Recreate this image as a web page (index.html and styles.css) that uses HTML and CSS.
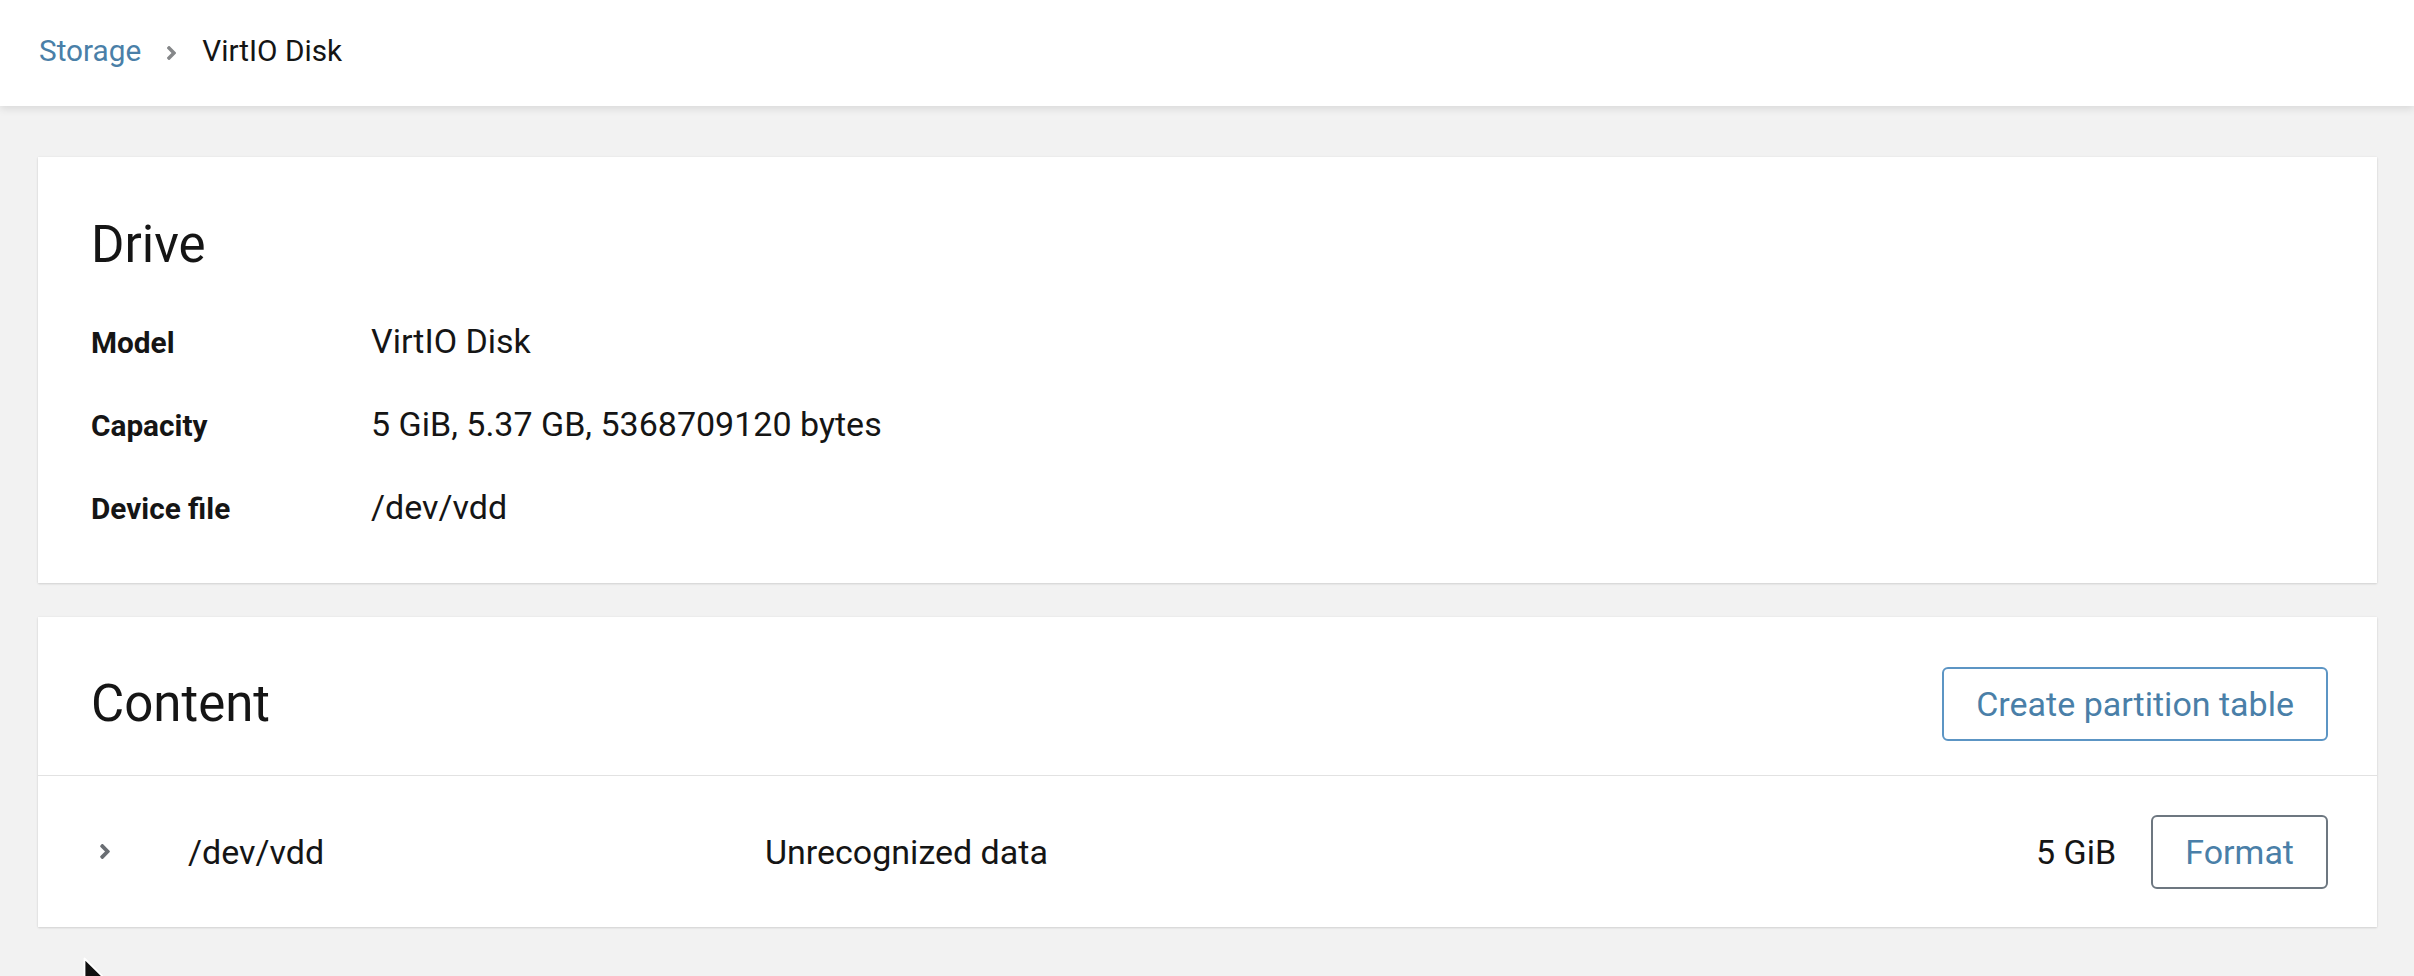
FILE: index.html
```html
<!DOCTYPE html>
<html>
<head>
<meta charset="utf-8">
<link rel="stylesheet" href="styles.css">
</head>
<body>
<header class="topbar">
  <nav class="crumbs">
    <a class="crumb-link">Storage</a>
    <svg class="crumb-sep" viewBox="25 96 206 320" width="9" height="14"><path d="M224.3 273l-136 136c-9.4 9.4-24.6 9.4-33.9 0l-22.6-22.6c-9.4-9.4-9.4-24.6 0-33.9l96.4-96.4-96.4-96.4c-9.4-9.4-9.4-24.6 0-33.9L54.3 103c9.4-9.4 24.6-9.4 33.9 0l136 136c9.5 9.4 9.5 24.6.1 34z"/></svg>
    <span class="crumb-current">VirtIO Disk</span>
  </nav>
</header>
<main class="page">
  <section class="card">
    <h2 class="card-title">Drive</h2>
    <dl class="info">
      <dt>Model</dt><dd>VirtIO Disk</dd>
      <dt>Capacity</dt><dd>5 GiB, 5.37 GB, 5368709120 bytes</dd>
      <dt>Device file</dt><dd>/dev/vdd</dd>
    </dl>
  </section>
  <section class="card">
    <div class="card-head">
      <h2 class="card-title">Content</h2>
      <button class="btn btn-blue">Create partition table</button>
    </div>
    <div class="row">
      <span class="toggle"><svg viewBox="25 96 206 320" width="10" height="15"><path d="M224.3 273l-136 136c-9.4 9.4-24.6 9.4-33.9 0l-22.6-22.6c-9.4-9.4-9.4-24.6 0-33.9l96.4-96.4-96.4-96.4c-9.4-9.4-9.4-24.6 0-33.9L54.3 103c9.4-9.4 24.6-9.4 33.9 0l136 136c9.5 9.4 9.5 24.6.1 34z"/></svg></span>
      <span class="col-name">/dev/vdd</span>
      <span class="col-type">Unrecognized data</span>
      <span class="col-size">5 GiB</span>
      <button class="btn btn-gray">Format</button>
    </div>
  </section>
</main>
<svg class="cursor" viewBox="0 0 16 24" width="24" height="36"><path d="M1 1 L1 19 L5.5 14.8 L8.5 21.5 L11 20.4 L8.1 13.9 L14 13.9 Z" fill="#111" stroke="#fff" stroke-width="1.2" stroke-linejoin="round"/></svg>
</body>
</html>
```

FILE: styles.css
```css
* { box-sizing: border-box; }
html, body { margin: 0; padding: 0; }
body {
  background: #f2f2f2;
  font-family: "Roboto", "Liberation Sans", sans-serif;
  color: #151515;
  width: 2414px;
  height: 976px;
  overflow: hidden;
  position: relative;
}
.topbar {
  height: 106px;
  background: #fff;
  box-shadow: 0 3px 8px rgba(0,0,0,0.10);
  display: flex;
  align-items: center;
  padding-left: 39px;
  position: relative;
}
.crumbs {
  display: flex;
  align-items: center;
  gap: 26px;
  font-size: 29.75px;
  line-height: 44px;
  margin-top: -4px;
}
.crumb-link { color: #4a7fa8; }
.crumb-sep { fill: #858789; margin-top: 3px; }
.crumb-current { color: #151515; }
.page {
  padding: 51px 37px 0 38px;
  display: flex;
  flex-direction: column;
  gap: 34px;
}
.card {
  background: #fff;
  box-shadow: 0 1px 2px rgba(3,3,3,0.12), 0 0 2px rgba(3,3,3,0.06);
}
.card-title { margin: 0; font-weight: 400; font-size: 51px; line-height: 66px; }
.card > .card-title { padding: 55px 53px 0; }
.info {
  margin: 38px 0 0;
  padding: 0 53px 49px;
  display: grid;
  grid-template-columns: 280px 1fr;
  align-items: baseline;
  row-gap: 31px;
  font-size: 34px;
  line-height: 51px;
}
.info dt { font-weight: 700; font-size: 29.75px; }
.info dd { margin: 0; }
.card-head {
  display: flex;
  align-items: center;
  justify-content: space-between;
  padding: 50px 49px 34px 53px;
  border-bottom: 1px solid #e2e2e2;
}
.btn {
  font: inherit;
  font-size: 34px;
  background: #fff;
  color: #4a7fa8;
  border-radius: 6px;
  height: 74px;
  padding: 0 32px;
}
.btn-blue { border: 2px solid #5c95c4; }
.btn-gray { border: 2px solid #6d7780; }
.row {
  display: flex;
  align-items: center;
  height: 151px;
  padding: 0 49px 0 62px;
  font-size: 34px;
}
.toggle { width: 88px; display: flex; fill: #6a6e73; }
.col-name { width: 577px; }
.col-type { flex: 1; }
.col-size { margin-right: 35px; }
.cursor { position: absolute; left: 83px; top: 957px; }
```
